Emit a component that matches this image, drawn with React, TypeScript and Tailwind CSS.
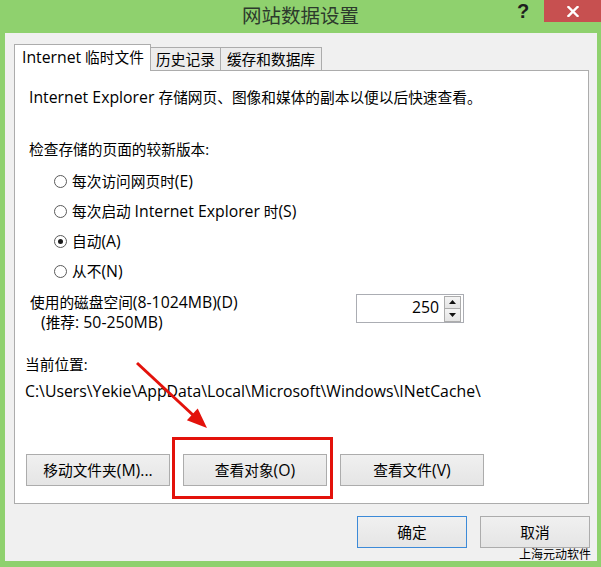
import React from "react";

function L({ children }: { children: React.ReactNode }) {
  return <span className="text-[15.8px]">{children}</span>;
}

function Radio({ checked, children }: { checked?: boolean; children: React.ReactNode }) {
  return (
    <div className="flex items-center h-[20px] ml-[25px]">
      <span className="w-[13px] h-[13px] rounded-full border border-[#5a5a5a] bg-white flex items-center justify-center shrink-0">
        {checked && <span className="w-[5px] h-[5px] rounded-full bg-[#1a1a1a]" />}
      </span>
      <span className="ml-[5px] whitespace-nowrap">{children}</span>
    </div>
  );
}

function Btn({ children, w, primary }: { children: React.ReactNode; w: string; primary?: boolean }) {
  return (
    <div
      className={
        primary
          ? "h-[32px] w-[110px] border border-[#3c8ad8] bg-gradient-to-b from-[#f0f0f0] to-[#e5e5e5] flex items-center justify-center whitespace-nowrap"
          : w === "wide"
          ? "h-[32px] w-[144px] border border-[#acacac] bg-gradient-to-b from-[#f0f0f0] to-[#e5e5e5] flex items-center justify-center whitespace-nowrap"
          : "h-[32px] w-[110px] border border-[#acacac] bg-gradient-to-b from-[#f0f0f0] to-[#e5e5e5] flex items-center justify-center whitespace-nowrap"
      }
    >
      <span>{children}</span>
    </div>
  );
}

export default function App() {
  return (
    <div className="relative w-[601px] h-[567px] bg-[#8fd16e] flex flex-col font-['Open_Sans','Noto_Sans_CJK_SC',sans-serif] text-black overflow-hidden">
      {/* title bar */}
      <div className="h-[33px] flex shrink-0">
        <div className="flex-1" />
        <div className="text-[19.5px] leading-[30px] text-[#2c3a2c] font-['Noto_Sans_CJK_SC',sans-serif] whitespace-nowrap">
          网站数据设置
        </div>
        <div className="flex-1 flex justify-end items-start">
          <div className="w-[20px] h-[22px] mr-[11px] flex items-center justify-center text-[20px] font-bold text-[#1e1e1e] leading-none font-['Liberation_Sans',sans-serif]">
            ?
          </div>
          <div className="w-[57px] h-[22px] bg-[#c75050] flex items-center justify-center">
            <svg width="12" height="11" viewBox="0 0 12 11">
              <path d="M1.5 1 L10.5 10 M10.5 1 L1.5 10" stroke="#ffffff" strokeWidth="2.4" strokeLinecap="square" />
            </svg>
          </div>
        </div>
      </div>

      {/* client */}
      <div className="ml-[5px] mr-[4px] mb-[6px] flex-1 bg-[#f0f0f0] pt-[11px] pl-[9px] pr-[8px] flex flex-col text-[14.7px] leading-[20px]">
        {/* tabs */}
        <div className="flex items-start h-[26px] relative z-10">
          <div className="h-[27px] w-[137px] bg-white border border-[#acacac] border-b-0 pl-[7px] leading-[25px] whitespace-nowrap">
            <L>Internet</L> 临时文件
          </div>
          <div className="mt-[3px] h-[23px] w-[70px] bg-[#ececec] border border-l-0 border-b-0 border-[#acacac] flex items-center justify-center whitespace-nowrap">
            历史记录
          </div>
          <div className="mt-[3px] h-[23px] w-[101px] bg-[#ececec] border border-l-0 border-b-0 border-[#acacac] flex items-center justify-center whitespace-nowrap">
            缓存和数据库
          </div>
        </div>

        {/* panel */}
        <div className="h-[434px] bg-white border border-[#acacac] flex flex-col pl-[14px] pt-[16px]">
          <div className="whitespace-nowrap">
            <L>Internet Explorer </L>存储网页、图像和媒体的副本以便以后快速查看。
          </div>
          <div className="mt-[32px]">检查存储的页面的较新版本:</div>
          <div className="mt-[12px] flex flex-col gap-[10px]">
            <Radio>
              每次访问网页时<L>(E)</L>
            </Radio>
            <Radio>
              每次启动 <L>Internet Explorer</L> 时<L>(S)</L>
            </Radio>
            <Radio checked>
              自动<L>(A)</L>
            </Radio>
            <Radio>
              从不<L>(N)</L>
            </Radio>
          </div>
          <div className="flex mt-[11px]">
            <div className="w-[327px]">
              <div className="ml-px whitespace-nowrap">
                使用的磁盘空间<L>(8-1024MB)(D)</L>
              </div>
              <div className="ml-[12px] leading-[21px] whitespace-nowrap">
                <L>(</L>推荐<L>: 50-250MB)</L>
              </div>
            </div>
            <div className="mt-[2px] w-[108px] h-[29px] border border-[#abadb3] bg-white flex items-center justify-end pr-[2px]">
              <span className="mr-[5px] -mt-[3px]">
                <L>250</L>
              </span>
              <div className="flex flex-col w-[17px]">
                <div className="h-[13px] border border-[#acacac] bg-gradient-to-b from-[#f4f4f4] to-[#e4e4e4] flex items-center justify-center">
                  <svg width="7" height="4" viewBox="0 0 7 4">
                    <polygon points="3.5,0 7,4 0,4" fill="#111" />
                  </svg>
                </div>
                <div className="h-[13px] border border-t-0 border-[#acacac] bg-gradient-to-b from-[#f4f4f4] to-[#e4e4e4] flex items-center justify-center">
                  <svg width="7" height="4" viewBox="0 0 7 4">
                    <polygon points="0,0 7,0 3.5,4" fill="#111" />
                  </svg>
                </div>
              </div>
            </div>
          </div>
          <div className="mt-[21px] -ml-[4px]">当前位置:</div>
          <div className="mt-[7px] -ml-[4px] whitespace-nowrap">
            <L>C:\Users\Yekie\AppData\Local\Microsoft\Windows\INetCache\</L>
          </div>
          <div className="mt-[53px] -ml-[3px] flex gap-[13px]">
            <Btn w="wide">
              移动文件夹<L>(M)...</L>
            </Btn>
            <Btn w="wide">
              查看对象<L>(O)</L>
            </Btn>
            <Btn w="wide">
              查看文件<L>(V)</L>
            </Btn>
          </div>
        </div>

        {/* bottom buttons */}
        <div className="mt-[12px] -mr-px flex justify-end gap-[13px]">
          <Btn w="n" primary>
            确定
          </Btn>
          <Btn w="n">取消</Btn>
        </div>
      </div>

      {/* annotations */}
      <div className="absolute left-[172px] top-[437px] w-[161px] h-[62px] border-[3px] border-[#e3120b]" />
      <svg className="absolute left-0 top-0" width="601" height="567" viewBox="0 0 601 567">
        <line x1="137" y1="363" x2="193" y2="415" stroke="#e3120b" strokeWidth="3" />
        <polygon points="207,428 186.9,420.3 197.7,408.5" fill="#e3120b" />
      </svg>
      <div className="absolute left-[519px] top-[546px] text-[12px] leading-[15px] text-black font-['Noto_Sans_CJK_SC',sans-serif] whitespace-nowrap">
        上海元动软件
      </div>
    </div>
  );
}
